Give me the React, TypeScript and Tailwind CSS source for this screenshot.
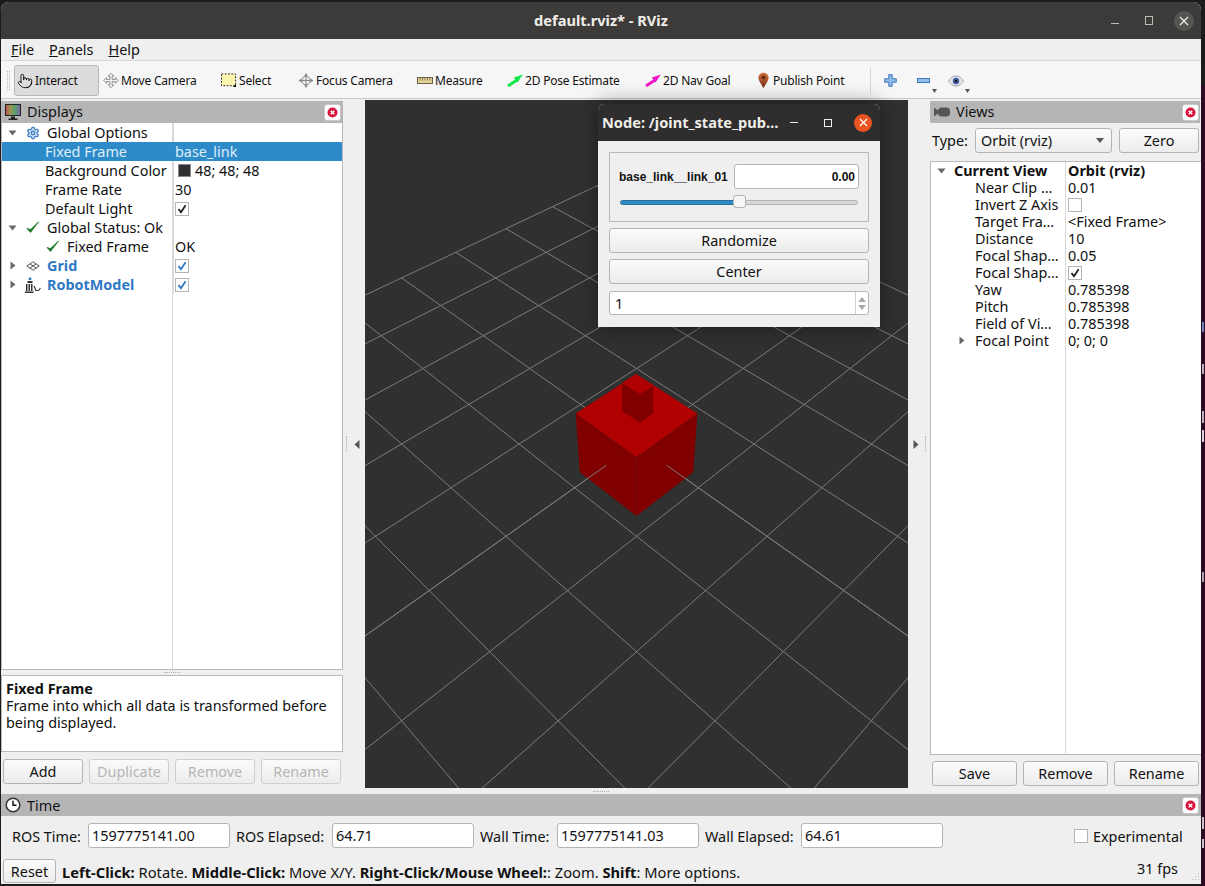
import React from "react";
import { Pointer, Settings } from "lucide-react";

// orbit camera from the Views panel: yaw/pitch 0.785398, distance 10, fov 0.785398
const VIEW_W = 543;
const VIEW_H = 688;
const FOCAL = VIEW_H / 2 / Math.tan(0.785398 / 2);

const project = (x: number, y: number, z: number) => {
  const s = Math.SQRT1_2;
  const rx = x - 5;
  const ry = y - 5;
  const rz = z - 10 * s;
  const right = -s * rx + s * ry;
  const up = -0.5 * rx - 0.5 * ry + s * rz;
  const depth = -0.5 * rx - 0.5 * ry - s * rz;
  return [VIEW_W / 2 + (FOCAL * right) / depth, VIEW_H / 2 - (FOCAL * up) / depth];
};

const pts = (list: number[][]) => list.map((p) => project(p[0], p[1], p[2]).join(",")).join(" ");

const segment = (a: number[], b: number[], key: string) => {
  const p = project(a[0], a[1], 0);
  const q = project(b[0], b[1], 0);
  return <line key={key} x1={p[0]} y1={p[1]} x2={q[0]} y2={q[1]} />;
};

const gridLines: React.ReactNode[] = [];
for (let i = -5; i <= 5; i++) {
  gridLines.push(segment([i, -5], [i, 5], `x${i}`));
  gridLines.push(segment([-5, i], [5, i], `y${i}`));
}

const Scene = () => (
  <svg width={VIEW_W} height={VIEW_H} viewBox={`0 0 ${VIEW_W} ${VIEW_H}`} className="block">
    <g stroke="#7c7c7c" strokeWidth="1" fill="none">{gridLines}</g>
    {/* base link cube */}
    <polygon fill="#b00000" points={pts([[0.5, 0.5, 0.5], [0.5, -0.5, 0.5], [-0.5, -0.5, 0.5], [-0.5, 0.5, 0.5]])} />
    <polygon fill="#800000" points={pts([[0.5, 0.5, 0.5], [0.5, -0.5, 0.5], [0.5, -0.5, -0.5], [0.5, 0.5, -0.5]])} />
    <polygon fill="#800000" points={pts([[0.5, 0.5, 0.5], [-0.5, 0.5, 0.5], [-0.5, 0.5, -0.5], [0.5, 0.5, -0.5]])} />
    {/* link_01 box, offsets from the viewport origin (365,100) */}
    <polygon fill="#b00000" points="257,283 271,274 288,286 275,294" />
    <polygon fill="#800000" points="257,283 275,294 275,323 257,311" />
    <polygon fill="#800000" points="275,294 288,286 288,313 275,323" />
    {/* grid lines lying in front of the lower half of the cube */}
    <g stroke="#7c7c7c" strokeWidth="1" fill="none">
      {segment([0.5, 0], [5, 0], "front-x")}
      {segment([0, 0.5], [0, 5], "front-y")}
    </g>
  </svg>
);

const CloseBtn = () => (
  <div className="flex h-[17px] w-[17px] items-center justify-center rounded-[3px] border border-[#c8c8c8] bg-white">
    <svg width="11" height="11" viewBox="0 0 11 11">
      <circle cx="5.5" cy="5.5" r="5" fill="#d9143c" />
      <path d="M3.7 3.7l3.6 3.6M7.3 3.7l-3.6 3.6" stroke="#fff" strokeWidth="1.4" />
    </svg>
  </div>
);

const MonitorIcon = () => (
  <svg width="17" height="17" viewBox="0 0 17 17">
    <defs>
      <linearGradient id="mon" x1="0" x2="1" y1="0" y2="0">
        <stop offset="0" stopColor="#c05050" />
        <stop offset="0.33" stopColor="#9a9a50" />
        <stop offset="0.66" stopColor="#50a070" />
        <stop offset="1" stopColor="#8060b0" />
      </linearGradient>
    </defs>
    <rect x="0.5" y="0.5" width="15" height="11" fill="url(#mon)" stroke="#222" />
    <path d="M6 12.5h4v2h2.500v1.500h-9v-1.500h2.500z" fill="#222" />
  </svg>
);

const CameraIcon = () => (
  <svg width="17" height="12" viewBox="0 0 17 12">
    <path d="M0 1.500l4 3v3l-4 3z" fill="#555" />
    <rect x="4" y="1.500" width="12" height="9" rx="3.500" fill="#555" />
  </svg>
);

const ClockIcon = () => (
  <svg width="16" height="16" viewBox="0 0 16 16">
    <circle cx="8" cy="8" r="6.800" fill="#fff" stroke="#333" strokeWidth="1.500" />
    <path d="M8 3.800v4.500h3.500" fill="none" stroke="#111" strokeWidth="1.500" />
  </svg>
);

const Caret = ({ open }: { open: boolean }) =>
  open ? (
    <svg width="9" height="6" viewBox="0 0 9 6">
      <path d="M0.500 0.500h8l-4 5z" fill="#6a6a6a" />
    </svg>
  ) : (
    <svg width="6" height="9" viewBox="0 0 6 9">
      <path d="M0.500 0.500v8l5-4z" fill="#6a6a6a" />
    </svg>
  );

const Check = ({ color = "#222" }: { color?: string }) => (
  <svg width="10" height="10" viewBox="0 0 10 10">
    <path d="M1.500 5.200l2.500 3L8.600 1.200" fill="none" stroke={color} strokeWidth="1.800" />
  </svg>
);

const Box = ({ checked, color }: { checked?: boolean; color?: string }) => (
  <span className="flex h-[14px] w-[14px] items-center justify-center border border-[#b4b4b4] bg-white">
    {checked && <Check color={color} />}
  </span>
);

const GreenCheck = () => (
  <svg width="14" height="13" viewBox="0 0 14 13">
    <path d="M1 7.500l3.500 4L12.500 1l-8 7.500z" fill="#1f7a2a" stroke="#1f7a2a" strokeWidth="0.800" />
  </svg>
);

const GridIcon = () => (
  <svg width="14" height="10" viewBox="0 0 14 10">
    <path d="M7 .8l6.200 4.200L7 9.200.8 5zM4 2.900l6.200 4.200M10 2.900L3.800 7.100" fill="none" stroke="#444" strokeWidth="0.900" />
  </svg>
);

const RobotIcon = () => (
  <svg width="16" height="16" viewBox="0 0 16 16">
    <circle cx="5" cy="1.800" r="1.500" fill="#3a7ac0" />
    <rect x="2.500" y="4" width="5" height="2" fill="#333" />
    <path d="M1 7h1.500v7H1zM3.500 7H5v7H3.500zM6 7h1.500v7H6zM0 14.500h8.500V16H0z" fill="#333" />
    <path d="M9 9l2 4.500h2.500L15.500 11" fill="none" stroke="#333" strokeWidth="1.200" />
  </svg>
);

// text value nudged onto the reference baseline; boxes stay centred
const cellValue = (value: React.ReactNode) =>
  typeof value === "string" ? <span className="translate-y-[1px]">{value}</span> : value;

const TreeRow = ({
  indent,
  caret,
  icon,
  iconLeft = "left-[23px]",
  label,
  value,
  selected,
  labelClass = "",
}: {
  indent: string;
  caret?: "open" | "closed";
  icon?: React.ReactNode;
  iconLeft?: string;
  label: string;
  value?: React.ReactNode;
  selected?: boolean;
  labelClass?: string;
}) => (
  <div className={`flex h-[19px] items-center ${selected ? "bg-[#2e8bc9] text-[#dfeefa]" : ""}`}>
    <div className={`relative flex h-full w-[171px] shrink-0 items-center whitespace-nowrap ${indent}`}>
      {caret && (
        <span className="absolute left-[6px] top-0 flex h-full w-[9px] items-center justify-center">
          <Caret open={caret === "open"} />
        </span>
      )}
      {icon && <span className={`absolute top-0 flex h-full w-[16px] items-center justify-center ${iconLeft}`}>{icon}</span>}
      <span className={`translate-y-[1px] ${labelClass}`}>{label}</span>
    </div>
    <div className={`flex h-full flex-1 items-center border-l pl-[1px] ${selected ? "border-[#2e8bc9]" : "border-[#d9d9d9]"}`}>{cellValue(value)}</div>
  </div>
);

const ViewRow = ({ label, value, caret, bold }: { label: string; value: React.ReactNode; caret?: "open" | "closed"; bold?: boolean }) => (
  <div className="flex h-[17px] items-center">
    <div className={`relative flex h-full w-[134px] shrink-0 items-center whitespace-nowrap ${bold ? "pl-[23px] font-bold" : "pl-[44px]"}`}>
      {caret && (
        <span className={`absolute top-0 flex h-full items-center ${bold ? "left-[6px]" : "left-[28px]"}`}>
          <Caret open={caret === "open"} />
        </span>
      )}
      <span className="translate-y-[1px]">{label}</span>
    </div>
    <div className={`flex h-full flex-1 items-center border-l border-[#d9d9d9] pl-[2px] ${bold ? "font-bold" : ""}`}>{cellValue(value)}</div>
  </div>
);

const Btn = ({ label, className, disabled }: { label: string; className: string; disabled?: boolean }) => (
  <div
    className={`flex items-center justify-center rounded-[3px] border bg-gradient-to-b from-[#fbfbfb] to-[#ececec] ${
      disabled ? "border-[#cfcfcf] text-[#b5b5b5]" : "border-[#b4b4b4]"
    } ${className}`}
  >
    <span className="translate-y-[1px]">{label}</span>
  </div>
);

const Field = ({ value, className }: { value: string; className: string }) => (
  <div className={`flex h-[25px] items-center rounded-[3px] border border-[#b4b4b4] bg-white pl-[3px] ${className}`}>
    <span className="translate-y-[1px]">{value}</span>
  </div>
);

const Bar = ({
  icon,
  title,
  width,
  right = "pr-[2px]",
  titleClass = "",
}: {
  icon: React.ReactNode;
  title: string;
  width: string;
  right?: string;
  titleClass?: string;
}) => (
  <div className={`flex h-[22px] items-center justify-between bg-[#b5b5b5] pl-[4px] ${right} ${width}`}>
    <div className="flex items-center">
      <span className="flex w-[22px] items-center">{icon}</span>
      <span className={titleClass}>{title}</span>
    </div>
    <CloseBtn />
  </div>
);

const ToolItem = ({ width, icon, label, active }: { width: string; icon: React.ReactNode; label: string; active?: boolean }) => (
  <div
    className={`flex h-[31px] shrink-0 items-center whitespace-nowrap ${width} ${
      active ? "rounded-[3px] border border-[#b8b8b8] bg-[#dcdcdc] pl-[2px]" : "pl-[4px]"
    }`}
  >
    <span className="mr-[2px] flex w-[16px] shrink-0 items-center justify-center">{icon}</span>
    {label}
  </div>
);

const MoveIcon = () => (
  <svg width="17" height="17" viewBox="0 0 17 17">
    <path
      d="M8.500 .8l3 3H9.700v3.500h3.500V5.500l3 3-3 3V9.700H9.700v3.500h1.800l-3 3-3-3h1.800V9.700H3.800v1.800l-3-3 3-3v1.800h3.500V3.800H5.500z"
      fill="#f4f4f4"
      stroke="#7a7a7a"
      strokeWidth="0.900"
    />
  </svg>
);

const SelectIcon = () => (
  <svg width="17" height="15" viewBox="0 0 17 15">
    <rect x="0.500" y="0.500" width="15" height="12.500" fill="#fdf6b0" stroke="#222" strokeDasharray="2 1.500" />
    <path d="M16 11v3.500h-3.500z" fill="#111" />
  </svg>
);

const FocusIcon = () => (
  <svg width="17" height="17" viewBox="0 0 17 17">
    <path d="M8.500 .5l2 3h-4zM8.500 16.500l2-3h-4zM.5 8.500l3-2v4zM16.500 8.500l-3-2v4z" fill="#8a8a8a" />
    <circle cx="8.500" cy="8.500" r="4.500" fill="#ececec" stroke="#777" />
    <path d="M8.500 3.500v10M3.500 8.500h10" stroke="#777" strokeWidth="0.900" />
  </svg>
);

const RulerIcon = () => (
  <svg width="16" height="7" viewBox="0 0 16 7">
    <rect x="0.500" y="0.500" width="15" height="6" fill="#e3d39a" stroke="#6b6248" />
    <path d="M3 1v2.500M5.500 1v2.500M8 1v2.500M10.500 1v2.500M13 1v2.500" stroke="#6b6248" strokeWidth="0.800" />
  </svg>
);

const ArrowIcon = ({ color }: { color: string }) => (
  <svg width="16" height="13" viewBox="0 0 16 13">
    <path d="M1 12L10 6" stroke={color} strokeWidth="3" fill="none" />
    <path d="M15.800 .6L6.800 3.600l3.800 5z" fill={color} />
  </svg>
);

const PinIcon = () => (
  <svg width="11" height="17" viewBox="0 0 12 18">
    <defs>
      <linearGradient id="pin" x1="0" x2="0" y1="0" y2="1">
        <stop offset="0" stopColor="#d8703a" />
        <stop offset="1" stopColor="#6e3418" />
      </linearGradient>
    </defs>
    <path d="M6 .5C2.800.5.500 2.800.5 6c0 3.500 3.500 7.500 5.500 11.500C8 13.500 11.500 9.500 11.500 6 11.500 2.800 9.200.5 6 .5z" fill="url(#pin)" />
    <circle cx="6" cy="5.500" r="2" fill="#5e2b12" />
  </svg>
);

const tools = [
  { width: "w-[85px]", icon: <Pointer size={18} strokeWidth={1.4} color="#111" />, label: "Interact", active: true },
  { width: "w-[118px]", icon: <MoveIcon />, label: "Move Camera" },
  { width: "w-[77px]", icon: <SelectIcon />, label: "Select" },
  { width: "w-[119px]", icon: <FocusIcon />, label: "Focus Camera" },
  { width: "w-[90px]", icon: <RulerIcon />, label: "Measure" },
  { width: "w-[138px]", icon: <ArrowIcon color="#12e84a" />, label: "2D Pose Estimate" },
  { width: "w-[110px]", icon: <ArrowIcon color="#f018c8" />, label: "2D Nav Goal" },
  { width: "w-[119px]", icon: <PinIcon />, label: "Publish Point" },
];

const displays: React.ComponentProps<typeof TreeRow>[] = [
  { indent: "pl-[45px]", caret: "open", icon: <Settings size={14} color="#3f7fc6" fill="#cfe0f5" strokeWidth={2.2} />, label: "Global Options" },
  { indent: "pl-[43px]", label: "Fixed Frame", value: "base_link", selected: true },
  {
    indent: "pl-[43px]",
    label: "Background Color",
    value: (
      <span className="flex items-center">
        <span className="ml-[3px] mr-[4px] h-[13px] w-[13px] border border-[#888] bg-[#303030]" />
        <span className="translate-y-[1px]">48; 48; 48</span>
      </span>
    ),
  },
  { indent: "pl-[43px]", label: "Frame Rate", value: "30" },
  { indent: "pl-[43px]", label: "Default Light", value: <Box checked /> },
  { indent: "pl-[45px]", caret: "open", icon: <GreenCheck />, label: "Global Status: Ok" },
  { indent: "pl-[65px]", icon: <GreenCheck />, iconLeft: "left-[43px]", label: "Fixed Frame", value: "OK" },
  { indent: "pl-[45px]", caret: "closed", icon: <GridIcon />, label: "Grid", labelClass: "font-bold text-[#2f78c4]", value: <Box checked color="#2f78c4" /> },
  { indent: "pl-[45px]", caret: "closed", icon: <RobotIcon />, label: "RobotModel", labelClass: "font-bold text-[#2f78c4]", value: <Box checked color="#2f78c4" /> },
];

const views: React.ComponentProps<typeof ViewRow>[] = [
  { label: "Current View", value: "Orbit (rviz)", caret: "open", bold: true },
  { label: "Near Clip …", value: "0.01" },
  { label: "Invert Z Axis", value: <Box /> },
  { label: "Target Fra…", value: "<Fixed Frame>" },
  { label: "Distance", value: "10" },
  { label: "Focal Shap…", value: "0.05" },
  { label: "Focal Shap…", value: <Box checked /> },
  { label: "Yaw", value: "0.785398" },
  { label: "Pitch", value: "0.785398" },
  { label: "Field of Vi…", value: "0.785398" },
  { label: "Focal Point", value: "0; 0; 0", caret: "closed" },
];

const Gutter = ({ dir }: { dir: "left" | "right" }) => (
  <div className={`-mt-[1px] flex h-[688px] w-[22px] shrink-0 items-center ${dir === "left" ? "pl-[3px]" : "pl-[5px]"}`}>
    {dir === "left" ? (
      <>
        <span className="h-[16px] w-[1px] border-l border-dotted border-[#b0b0b0]" />
        <svg className="ml-[7px]" width="6" height="9" viewBox="0 0 6 9">
          <path d="M5.500 0v9L.5 4.500z" fill="#555" />
        </svg>
      </>
    ) : (
      <>
        <svg width="6" height="9" viewBox="0 0 6 9">
          <path d="M.5 0v9l5-4.500z" fill="#555" />
        </svg>
        <span className="ml-[6px] h-[16px] w-[1px] border-l border-dotted border-[#b0b0b0]" />
      </>
    )}
  </div>
);

// floating joint_state_publisher window
const NodeDialog = () => (
  <div className="absolute left-[598px] top-[104px] w-[282px] overflow-hidden rounded-t-[6px] bg-[#efefef] shadow-[0_0_20px_rgba(0,0,0,0.45)]">
    <div className="flex h-[37px] items-center bg-[#2f2d2d] pl-[4px] text-[14.6px] font-bold text-[#f0eee9]">
      <span className="w-[188px] whitespace-nowrap">Node: /joint_state_pub…</span>
      <span className="h-[1px] w-[8px] bg-[#f0eee9]" />
      <span className="ml-[26px] h-[8px] w-[8px] border border-[#f0eee9]" />
      <span className="ml-[22px] flex h-[18px] w-[18px] items-center justify-center rounded-full bg-[#e95420]">
        <svg width="9" height="9" viewBox="0 0 9 9">
          <path d="M1 1l7 7M8 1L1 8" stroke="#fff" strokeWidth="1.200" />
        </svg>
      </span>
    </div>
    <div className="flex flex-col px-[11px] pb-[12px] pt-[11px]">
      <div className="h-[70px] border border-[#b9b9b9] px-[9px] pt-[11px]">
        <div className="flex items-center">
          <span className="w-[115px] whitespace-nowrap [font-family:'Liberation_Sans',sans-serif] text-[12px] font-bold">base_link__link_01</span>
          <div className="flex h-[25px] flex-1 items-center justify-end rounded-[3px] border border-[#b4b4b4] bg-white pr-[3px] [font-family:'Liberation_Sans',sans-serif] text-[12px] font-bold">
            0.00
          </div>
        </div>
        <div className="relative mx-[1px] mt-[11px] h-[5px] rounded-full border border-[#b4b4b4] bg-[#d8d8d8]">
          <div className="h-full w-[118px] rounded-full bg-[#308cc6] outline outline-1 outline-[#2a6f9e]" />
          <div className="absolute left-[112px] top-[-6px] h-[13px] w-[13px] rounded-[3px] border border-[#b4b4b4] bg-[#f6f6f6]" />
        </div>
      </div>
      <Btn label="Randomize" className="mt-[6px] h-[25px]" />
      <Btn label="Center" className="mt-[6px] h-[25px]" />
      <div className="mt-[7px] flex h-[24px] items-center justify-between rounded-[3px] border border-[#b4b4b4] bg-white pl-[5px]">
        <span className="translate-y-[1px]">1</span>
        <span className="flex h-full w-[13px] flex-col items-center justify-center gap-[3px] border-l border-[#d0d0d0]">
          <svg width="8" height="5" viewBox="0 0 8 5"><path d="M4 0l4 5H0z" fill="#a8a8a8" /></svg>
          <svg width="8" height="5" viewBox="0 0 8 5"><path d="M4 5l4-5H0z" fill="#a8a8a8" /></svg>
        </span>
      </div>
    </div>
  </div>
);

// slivers of desktop icon labels behind the window's right edge
const desktopBits = [
  "top-[237px] h-[10px] bg-[#6f86b8]",
  "top-[279px] h-[10px] bg-[#b9b2bc]",
  "top-[326px] h-[12px] bg-[#b9b2bc]",
  "top-[345px] h-[12px] bg-[#d8d4da]",
  "top-[487px] h-[10px] bg-[#a9a2ac]",
  "top-[732px] h-[12px] bg-[#c9c4cc]",
  "top-[754px] h-[9px] bg-[#c9c4cc]",
];

export default function App() {
  return (
    <div className="relative h-[886px] w-[1205px] overflow-hidden bg-[#1d1b1b] [font-family:'Noto_Sans',sans-serif] text-[14.4px] leading-none text-[#111]">
      {/* desktop showing at the right edge */}
      <div className="absolute right-0 top-[85px] h-[801px] w-[4px] bg-[#2c0a24]">
        {desktopBits.map((b) => (
          <span key={b} className={`absolute left-[1px] w-[2px] ${b}`} />
        ))}
      </div>
      <div className="absolute left-[1px] top-[2px] flex h-[882px] w-[1200px] flex-col overflow-hidden rounded-t-[8px] bg-[#efefef]">
        {/* title bar */}
        <div className="relative flex h-[37px] shrink-0 items-center justify-center bg-[#3d3b39] text-[14.6px] font-bold text-[#f0eee9]">
          default.rviz* - RViz
          <div className="absolute left-[1110px] top-0 flex h-full items-center">
            <span className="mt-[6px] h-[1px] w-[8px] bg-[#bdbbb8]" />
            <span className="ml-[26px] h-[9px] w-[8px] border border-[#bdbbb8]" />
            <span className="ml-[21px] flex h-[20px] w-[20px] items-center justify-center rounded-full bg-[#575553]">
              <svg width="10" height="10" viewBox="0 0 10 10">
                <path d="M1 1l8 8M9 1L1 9" stroke="#f0eee9" strokeWidth="1.200" />
              </svg>
            </span>
          </div>
        </div>
        {/* menu bar */}
        <div className="flex h-[22px] shrink-0 items-center gap-[15px] border-b border-[#d8d8d8] bg-[#efefef] pl-[10px]">
          <span className="translate-y-[1px]"><span className="underline">F</span>ile</span>
          <span className="translate-y-[1px]"><span className="underline">P</span>anels</span>
          <span className="translate-y-[1px]"><span className="underline">H</span>elp</span>
        </div>
        {/* tool bar */}
        <div className="flex h-[38px] shrink-0 items-center border-b border-[#c8c8c8] bg-[#f6f6f6] pl-[6px] pt-[2px] text-[12px] tracking-[-0.2px]">
          <span className="mr-[4px] h-[19px] w-[3px] border-x border-dotted border-[#b8b8b8]" />
          {tools.map((t) => (
            <ToolItem key={t.label} width={t.width} icon={t.icon} label={t.label} active={t.active} />
          ))}
          <span className="h-[25px] w-[1px] bg-[#d4d4d4]" />
          <svg className="ml-[13px]" width="13" height="13" viewBox="0 0 13 13">
            <path d="M4.800.7h3.400v4.100h4.100v3.400H8.200v4.100H4.800V8.200H.7V4.800h4.100z" fill="#8fbce8" stroke="#3d78b8" />
          </svg>
          <svg className="ml-[20px]" width="13" height="6" viewBox="0 0 13 6">
            <rect x="0.500" y="0.500" width="12" height="4" fill="#8fbce8" stroke="#3d78b8" />
          </svg>
          <svg className="ml-[2px] mt-[20px]" width="5" height="4" viewBox="0 0 5 4"><path d="M0 0h5L2.500 4z" fill="#555" /></svg>
          <svg className="ml-[11px]" width="16" height="12" viewBox="0 0 16 12">
            <path d="M.5 6C3 2 5.500 1 8 1s5 1 7.500 5C13 10 10.500 11 8 11S3 10 .5 6z" fill="#dfe3ea" stroke="#9aa0ac" />
            <circle cx="8" cy="6" r="3.200" fill="#3d5f9e" />
            <circle cx="8" cy="6" r="1.300" fill="#111" />
          </svg>
          <svg className="ml-[1px] mt-[20px]" width="5" height="4" viewBox="0 0 5 4"><path d="M0 0h5L2.500 4z" fill="#555" /></svg>
        </div>
        {/* main area */}
        <div className="flex h-[695px] shrink-0 pt-[2px]">
          {/* displays */}
          <div className="flex w-[342px] shrink-0 flex-col">
            <Bar icon={<MonitorIcon />} title="Displays" width="w-full" />
            <div className="h-[547px] shrink-0 border-x border-b border-[#b9b9b9] bg-white">
              <div className="relative h-full">
                <div className="absolute bottom-0 left-[170px] top-0 w-[1px] bg-[#d9d9d9]" />
                <div className="relative">
                  {displays.map((row, i) => (
                    <TreeRow key={i} {...row} />
                  ))}
                </div>
              </div>
            </div>
            <div className="flex h-[5px] shrink-0 items-center justify-center">
              <span className="w-[16px] border-t border-dotted border-[#b0b0b0]" />
            </div>
            <div className="h-[77px] shrink-0 border border-[#b9b9b9] bg-white pl-[4px] pt-[4px] leading-[17px]">
              <div className="font-bold">Fixed Frame</div>
              <div>
                Frame into which all data is transformed before
                <br />
                being displayed.
              </div>
            </div>
            <div className="mt-[7px] flex gap-[6px] pl-[2px]">
              <Btn label="Add" className="h-[25px] w-[80px]" />
              <Btn label="Duplicate" className="h-[25px] w-[80px]" disabled />
              <Btn label="Remove" className="h-[25px] w-[80px]" disabled />
              <Btn label="Rename" className="h-[25px] w-[80px]" disabled />
            </div>
          </div>
          <Gutter dir="left" />
          {/* 3d view */}
          <div className="-mt-[1px] flex w-[543px] shrink-0 flex-col items-start">
            <div className="h-[688px] w-full shrink-0 overflow-hidden bg-[#303030]">
              <Scene />
            </div>
            <span className="ml-[228px] mt-[3px] w-[16px] border-t border-dotted border-[#b0b0b0]" />
          </div>
          <Gutter dir="right" />
          {/* views */}
          <div className="flex min-w-0 flex-1 flex-col">
            <Bar icon={<CameraIcon />} title="Views" width="w-[270px]" right="pr-[1px]" />
            <div className="mt-[5px] flex h-[25px] items-center pl-[2px]">
              <span className="w-[43px] translate-y-[1px]">Type:</span>
              <div className="flex h-[25px] w-[137px] items-center justify-between rounded-[3px] border border-[#b4b4b4] bg-gradient-to-b from-[#fbfbfb] to-[#ececec] pl-[5px] pr-[7px]">
                <span className="translate-y-[1px]">Orbit (rviz)</span>
                <svg width="8" height="5" viewBox="0 0 8 5"><path d="M0 0h8L4 5z" fill="#555" /></svg>
              </div>
              <Btn label="Zero" className="ml-[7px] h-[25px] w-[80px]" />
            </div>
            <div className="mt-[8px] h-[594px] shrink-0 border-y border-l border-[#b9b9b9] bg-white">
              <div className="relative h-full">
                <div className="absolute bottom-0 left-[134px] top-0 w-[1px] bg-[#d9d9d9]" />
                <div className="relative">
                  {views.map((row, i) => (
                    <ViewRow key={i} {...row} />
                  ))}
                </div>
              </div>
            </div>
            <div className="mt-[6px] flex gap-[6px] pl-[2px]">
              <Btn label="Save" className="h-[25px] w-[85px]" />
              <Btn label="Remove" className="h-[25px] w-[85px]" />
              <Btn label="Rename" className="h-[25px] w-[85px]" />
            </div>
          </div>
        </div>
        {/* time panel */}
        <Bar icon={<ClockIcon />} title="Time" width="w-full" right="pr-[2px]" titleClass="translate-y-[1px]" />
        <div className="mt-[7px] flex h-[25px] shrink-0 items-center pl-[11px]">
          <span className="w-[76px] translate-y-[2px]">ROS Time:</span>
          <Field value="1597775141.00" className="w-[142px]" />
          <span className="ml-[6px] w-[96px] translate-y-[2px]">ROS Elapsed:</span>
          <Field value="64.71" className="w-[142px]" />
          <span className="ml-[6px] w-[77px] translate-y-[2px]">Wall Time:</span>
          <Field value="1597775141.03" className="w-[142px]" />
          <span className="ml-[6px] w-[96px] translate-y-[2px]">Wall Elapsed:</span>
          <Field value="64.61" className="w-[142px]" />
          <span className="ml-[131px]"><Box /></span>
          <span className="ml-[5px] translate-y-[2px]">Experimental</span>
        </div>
        <div className="relative mt-[11px] flex h-[24px] shrink-0 items-center pl-[2px]">
          <Btn label="Reset" className="h-[24px] w-[53px]" />
          <span className="ml-[6px] translate-y-[1px] whitespace-nowrap text-[14.7px]">
            <b>Left-Click:</b> Rotate. <b>Middle-Click:</b> Move X/Y. <b>Right-Click/Mouse Wheel:</b>: Zoom. <b>Shift</b>: More options.
          </span>
          <span className="ml-auto mr-[23px] -translate-y-[2px]">31 fps</span>
          {/* size grip */}
          <svg className="absolute bottom-[1px] right-[1px]" width="10" height="10" viewBox="0 0 10 10">
            <path d="M8 1h1v1H8zM5 4h1v1H5zM8 4h1v1H8zM2 7h1v1H2zM5 7h1v1H5zM8 7h1v1H8z" fill="#b8b8b8" />
          </svg>
        </div>
      </div>
      <NodeDialog />
    </div>
  );
}
